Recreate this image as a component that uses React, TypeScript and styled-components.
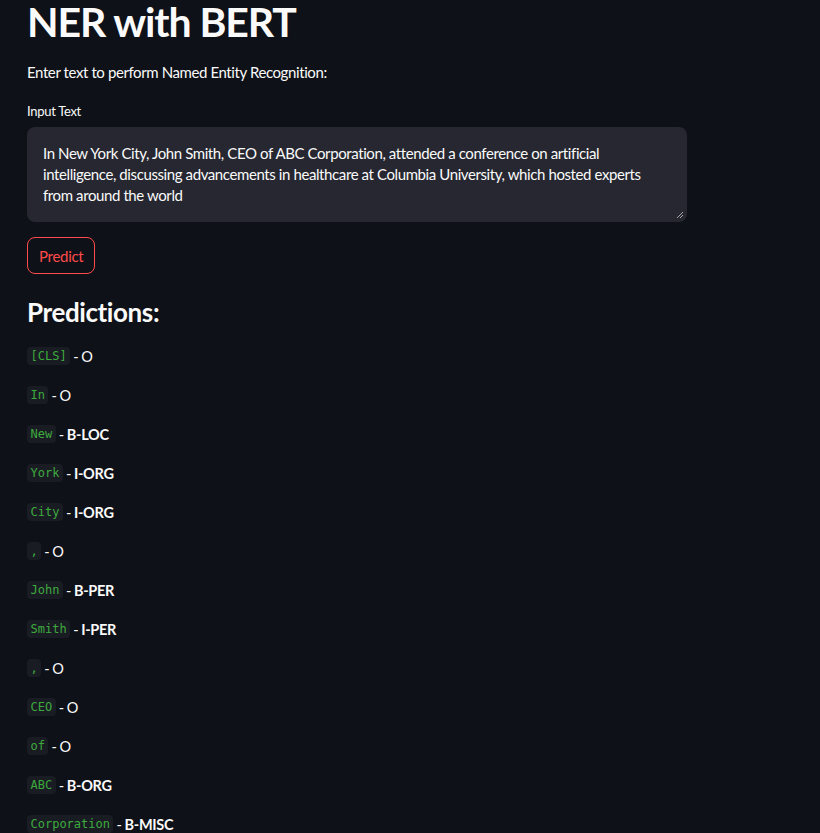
import React from "react";
import styled, { createGlobalStyle } from "styled-components";

const Global = createGlobalStyle`
  html, body { margin: 0; padding: 0; background: #0e1117; }
  body { font-family: Lato, "Noto Sans", "Liberation Sans", sans-serif; color: #fafafa; }
  * { box-sizing: border-box; }
`;

const Page = styled.main`
  min-height: 833px;
  background: #0e1117;
  padding: 0 0 0 27px;
  overflow: hidden;
`;

const Column = styled.div`
  width: 660px;
  display: flex;
  flex-direction: column;
`;

const Title = styled.h1`
  margin: -6px 0 0 0;
  font-size: 41px;
  line-height: 56px;
  font-weight: 700;
  letter-spacing: -1.1px;
  color: #fafafa;
`;

const Intro = styled.p`
  margin: 10px 0 0 0;
  font-size: 15px;
  line-height: 24px;
  letter-spacing: -0.4px;
`;

const Label = styled.label`
  margin-top: 18px;
  font-size: 13px;
  line-height: 18px;
  letter-spacing: -0.3px;
  display: block;
`;

const TextArea = styled.div`
  margin-top: 7px;
  position: relative;
  height: 95px;
  background: #262730;
  border-radius: 8px;
  padding: 16px 16px;
  font-size: 15px;
  line-height: 21px;
  letter-spacing: -0.4px;
  color: #fafafa;
`;

const Grip = styled.svg`
  position: absolute;
  right: 3px;
  bottom: 3px;
`;

const Button = styled.button`
  margin-top: 15px;
  align-self: flex-start;
  height: 37px;
  padding: 0 11px;
  background: transparent;
  border: 1px solid #ff4b4b;
  border-radius: 8px;
  color: #ff4b4b;
  font-family: inherit;
  font-size: 15px;
  letter-spacing: -0.3px;
`;

const Heading = styled.h2`
  margin: 20px 0 0 0;
  font-size: 26px;
  line-height: 36px;
  font-weight: 700;
  letter-spacing: -0.4px;
`;

const List = styled.div`
  margin-top: 14px;
  display: flex;
  flex-direction: column;
  gap: 15px;
`;

const Row = styled.div`
  height: 24px;
  display: flex;
  align-items: center;
  gap: 3px;
  font-size: 14.5px;
  letter-spacing: -0.3px;
`;

const Code = styled.code`
  font-family: "DejaVu Sans Mono", "Liberation Mono", monospace;
  font-size: 12px;
  line-height: 18px;
  height: 18px;
  padding: 0 3.5px;
  background: #1a1c24;
  color: #3daa3d;
  border-radius: 4px;
  letter-spacing: 0;
`;

const Tag = styled.span<{ $bold: boolean }>`
  font-weight: ${(p) => (p.$bold ? 700 : 400)};
`;

const preds: [string, string][] = [
  ["[CLS]", "O"],
  ["In", "O"],
  ["New", "B-LOC"],
  ["York", "I-ORG"],
  ["City", "I-ORG"],
  [",", "O"],
  ["John", "B-PER"],
  ["Smith", "I-PER"],
  [",", "O"],
  ["CEO", "O"],
  ["of", "O"],
  ["ABC", "B-ORG"],
  ["Corporation", "B-MISC"],
  ["attended", "O"],
];

export default function App() {
  return (
    <>
      <Global />
      <Page>
        <Column>
          <Title>NER with BERT</Title>
          <Intro>Enter text to perform Named Entity Recognition:</Intro>
          <Label>Input Text</Label>
          <TextArea>
            In New York City, John Smith, CEO of ABC Corporation, attended a conference on artificial
            intelligence, discussing advancements in healthcare at Columbia University, which hosted experts
            from around the world
            <Grip width="8" height="8" viewBox="0 0 8 8">
              <path d="M7 1 L1 7 M7 4 L4 7" stroke="#aaa" strokeWidth="1" />
            </Grip>
          </TextArea>
          <Button>Predict</Button>
          <Heading>Predictions:</Heading>
          <List>
            {preds.map(([t, l], i) => (
              <Row key={i}>
                <Code>{t}</Code>
                <span>-</span>
                <Tag $bold={l !== "O"}>{l}</Tag>
              </Row>
            ))}
          </List>
        </Column>
      </Page>
    </>
  );
}
